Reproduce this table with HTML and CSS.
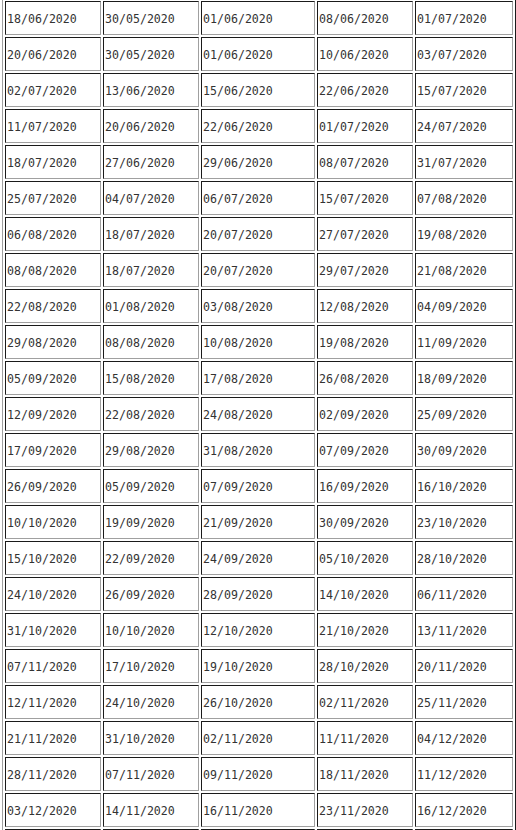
FILE: index.html
```html
<!DOCTYPE html>
<html>
<head>
<meta charset="utf-8">
<link rel="stylesheet" href="styles.css">
</head>
<body>
<div class="viewport">
<table class="dates">
<tr><td>18/06/2020</td><td>30/05/2020</td><td>01/06/2020</td><td>08/06/2020</td><td>01/07/2020</td></tr>
<tr><td>20/06/2020</td><td>30/05/2020</td><td>01/06/2020</td><td>10/06/2020</td><td>03/07/2020</td></tr>
<tr><td>02/07/2020</td><td>13/06/2020</td><td>15/06/2020</td><td>22/06/2020</td><td>15/07/2020</td></tr>
<tr><td>11/07/2020</td><td>20/06/2020</td><td>22/06/2020</td><td>01/07/2020</td><td>24/07/2020</td></tr>
<tr><td>18/07/2020</td><td>27/06/2020</td><td>29/06/2020</td><td>08/07/2020</td><td>31/07/2020</td></tr>
<tr><td>25/07/2020</td><td>04/07/2020</td><td>06/07/2020</td><td>15/07/2020</td><td>07/08/2020</td></tr>
<tr><td>06/08/2020</td><td>18/07/2020</td><td>20/07/2020</td><td>27/07/2020</td><td>19/08/2020</td></tr>
<tr><td>08/08/2020</td><td>18/07/2020</td><td>20/07/2020</td><td>29/07/2020</td><td>21/08/2020</td></tr>
<tr><td>22/08/2020</td><td>01/08/2020</td><td>03/08/2020</td><td>12/08/2020</td><td>04/09/2020</td></tr>
<tr><td>29/08/2020</td><td>08/08/2020</td><td>10/08/2020</td><td>19/08/2020</td><td>11/09/2020</td></tr>
<tr><td>05/09/2020</td><td>15/08/2020</td><td>17/08/2020</td><td>26/08/2020</td><td>18/09/2020</td></tr>
<tr><td>12/09/2020</td><td>22/08/2020</td><td>24/08/2020</td><td>02/09/2020</td><td>25/09/2020</td></tr>
<tr><td>17/09/2020</td><td>29/08/2020</td><td>31/08/2020</td><td>07/09/2020</td><td>30/09/2020</td></tr>
<tr><td>26/09/2020</td><td>05/09/2020</td><td>07/09/2020</td><td>16/09/2020</td><td>16/10/2020</td></tr>
<tr><td>10/10/2020</td><td>19/09/2020</td><td>21/09/2020</td><td>30/09/2020</td><td>23/10/2020</td></tr>
<tr><td>15/10/2020</td><td>22/09/2020</td><td>24/09/2020</td><td>05/10/2020</td><td>28/10/2020</td></tr>
<tr><td>24/10/2020</td><td>26/09/2020</td><td>28/09/2020</td><td>14/10/2020</td><td>06/11/2020</td></tr>
<tr><td>31/10/2020</td><td>10/10/2020</td><td>12/10/2020</td><td>21/10/2020</td><td>13/11/2020</td></tr>
<tr><td>07/11/2020</td><td>17/10/2020</td><td>19/10/2020</td><td>28/10/2020</td><td>20/11/2020</td></tr>
<tr><td>12/11/2020</td><td>24/10/2020</td><td>26/10/2020</td><td>02/11/2020</td><td>25/11/2020</td></tr>
<tr><td>21/11/2020</td><td>31/10/2020</td><td>02/11/2020</td><td>11/11/2020</td><td>04/12/2020</td></tr>
<tr><td>28/11/2020</td><td>07/11/2020</td><td>09/11/2020</td><td>18/11/2020</td><td>11/12/2020</td></tr>
<tr><td>03/12/2020</td><td>14/11/2020</td><td>16/11/2020</td><td>23/11/2020</td><td>16/12/2020</td></tr>
<tr><td></td><td></td><td></td><td></td><td></td></tr>
</table>
</div>
</body>
</html>
```

FILE: styles.css
```css
html, body {
  margin: 0;
  padding: 0;
  background: #ffffff;
}

.viewport {
  height: 830px;
  overflow: hidden;
}

.dates {
  margin: -2px 0 0 2px;
  border-collapse: separate;
  border-spacing: 2px;
  empty-cells: show;
  table-layout: fixed;
  border-style: solid;
  border-width: 1px;
  border-color: #a0a0a0 #1a1a1a #1a1a1a #a0a0a0;
  font-family: "DejaVu Sans Mono", "Liberation Mono", monospace;
  font-size: 11.6px;
  color: #333333;
}

.dates td {
  box-sizing: border-box;
  height: 34px;
  padding: 2px 1px 0 1px;
  border-style: solid;
  border-width: 1px;
  border-color: #1a1a1a #a0a0a0 #a0a0a0 #1a1a1a;
  vertical-align: middle;
  white-space: nowrap;
  width: 96px;
}

.dates td:nth-child(3) {
  width: 114px;
}

.dates td:nth-child(5) {
  width: 98px;
}
```
